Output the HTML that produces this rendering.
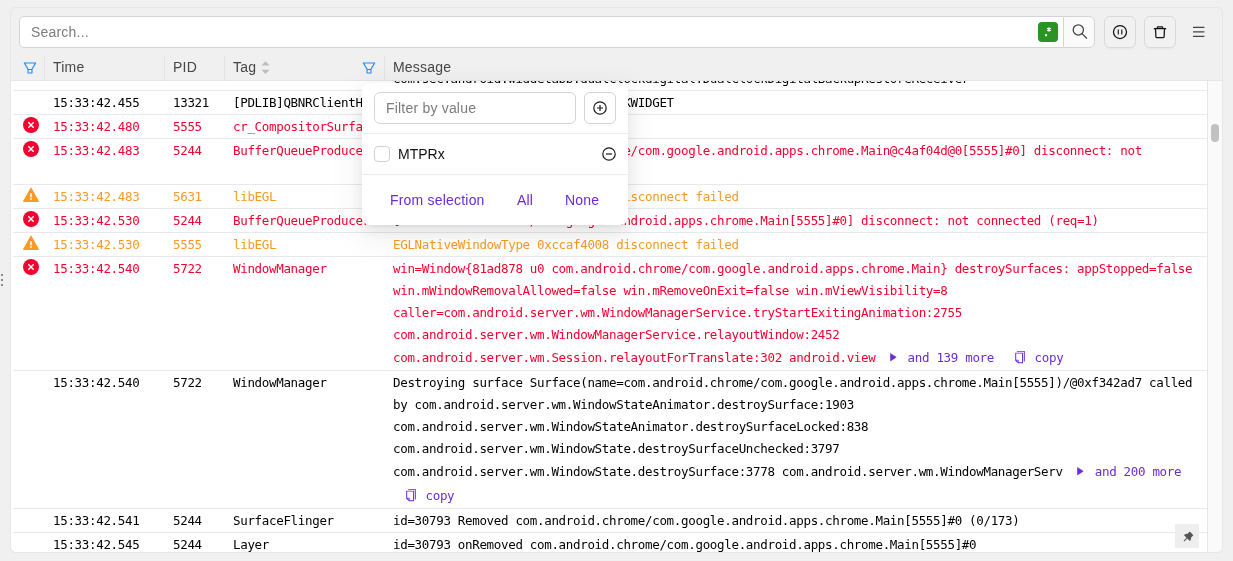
<!DOCTYPE html>
<html lang="en">
<head>
<meta charset="utf-8">
<title>Logs</title>
<style>
*{box-sizing:border-box}
html,body{margin:0;padding:0}
body{width:1233px;height:561px;overflow:hidden;background:#f0f0f0;position:relative;
  font-family:"Liberation Sans",sans-serif;font-size:14px;letter-spacing:.2px;color:rgba(0,0,0,.85)}
.abs{position:absolute}
#panel{position:absolute;left:10px;top:7px;width:1213px;height:546px;border:1px solid #e7e7e7;border-radius:6px;background:#f0f0f0;overflow:hidden}
/* coordinates inside #inner are page coordinates */
#inner{will-change:transform;position:absolute;left:-11px;top:-8px;width:1233px;height:561px}
#search{left:19px;top:16px;width:1045px;height:32px;background:#fff;border:1px solid #d4d4d4;border-radius:5px 0 0 5px}
#search .ph{position:absolute;left:11px;top:0;line-height:30px;color:#7c7c7c;font-size:14px}
#regex{left:1038px;top:22px;width:20px;height:20px;border-radius:4px;background:#2a9423}
#sbtn{left:1063px;top:16px;width:32px;height:32px;background:#fafafa;border:1px solid #d4d4d4;border-radius:0 6px 6px 0}
.tbtn{width:32px;height:32px;top:16px;border:1px solid #d9d9d9;border-radius:6px;background:#f1f1f1;box-shadow:0 2px 0 rgba(0,0,0,.02)}
svg{display:block;position:absolute;overflow:visible}
/* header */
#thead{left:11px;top:55px;width:1211px;height:26px;border-bottom:1px solid #e6e6e6}
.th{position:absolute;top:0;height:26px;line-height:25px;font-size:14px;color:#464646}
.sep{position:absolute;top:1px;width:1px;height:25px;background:#e3e3e3}
/* body */
#tbody{left:11px;top:81px;width:1196px;height:471px;background:#fff;overflow:hidden}
#track{left:1207px;top:81px;width:15px;height:471px;background:#fafafa;border-left:1px solid #e6e6e6}
#thumb{left:1211px;top:124px;width:8px;height:18px;border-radius:4px;background:#c1c1c1}
.row{position:absolute;left:0;width:1196px;border-top:1px solid #e9e9e9;
  font-family:"DejaVu Sans Mono","Liberation Mono",monospace;font-size:12.5px;letter-spacing:-0.325px;line-height:22px;color:#000;white-space:pre}
.row span.c{position:absolute;top:1px}
.row .t{left:42px}.row .p{left:162px}.row .g{left:222px;width:144px;overflow:hidden;text-overflow:ellipsis}
.row .m{left:382px}
.row.e{color:#f3002e}
.row.w{color:#f99a26}
.ln{display:block;height:22px}
.ln.b{height:24px;line-height:24px}
.lk{color:#6c2bd9}
/* popup */
#pop{left:362px;top:83px;width:266px;height:142px;background:#fff;border-radius:8px;
  box-shadow:0 6px 16px 0 rgba(0,0,0,.08),0 3px 6px -4px rgba(0,0,0,.12),0 9px 28px 8px rgba(0,0,0,.05)}
#pop .inp{position:absolute;left:12px;top:9px;width:202px;height:32px;border:1px solid #d4d4d4;border-radius:6px;background:#fff}
#pop .inp span{position:absolute;left:11px;top:0;line-height:30px;color:#7c7c7c}
#pop .add{position:absolute;left:222px;top:9px;width:32px;height:32px;border:1px solid #d4d4d4;border-radius:6px;background:#fff;box-shadow:0 2px 0 rgba(0,0,0,.02)}
#pop .hr{position:absolute;left:0;width:266px;height:1px;background:#ececec}
#pop .cb{position:absolute;left:12px;top:63px;width:16px;height:16px;border:1px solid #d0d0d0;border-radius:4px;background:#fff}
#pop .lbl{position:absolute;left:36px;top:60px;line-height:22px;color:#111;letter-spacing:0}
#pop .a{position:absolute;top:106px;line-height:22px;color:#6c2bd9}
#pin{left:1175px;top:524px;width:24px;height:24px;background:#eee}
.dot{position:absolute;left:1px;width:2px;height:2px;background:#8a8a8a}
</style>
</head>
<body>
<div class="dot" style="top:274px"></div><div class="dot" style="top:279px"></div><div class="dot" style="top:284px"></div>
<div id="panel"><div id="inner">

<!-- toolbar -->
<div id="search" class="abs"><span class="ph">Search...</span></div>
<div id="regex" class="abs">
  <svg width="20" height="20" viewBox="0 0 20 20" style="left:0;top:0"><rect x="7" y="12.2" width="2.1" height="2.1" fill="#fff"/><g stroke="#fff" stroke-width="1.1" stroke-linecap="butt"><path d="M11 5.2v4.6M9 6.35l4 2.3M13 6.35l-4 2.3"/></g></svg>
</div>
<div id="sbtn" class="abs">
  <svg width="16" height="16" viewBox="0 0 16 16" style="left:8px;top:6.300px" fill="none" stroke="#444" stroke-width="1.250"><circle cx="6.300" cy="6.900" r="5.100"/><path d="M10 10.600l4.600 4.600" stroke-linecap="round"/></svg>
</div>
<div class="tbtn abs" style="left:1104px">
  <svg width="16" height="16" viewBox="0 0 16 16" style="left:7px;top:7px" fill="none" stroke="#111" stroke-width="1.25"><circle cx="8" cy="8" r="6.5"/><path d="M6.300 5.400v5.200M9.800 5.400v5.200" stroke-width="1.100"/></svg>
</div>
<div class="tbtn abs" style="left:1144px">
  <svg width="16" height="16" viewBox="0 0 16 16" style="left:7px;top:7px" fill="none" stroke="#111" stroke-width="1.25"><path d="M1.800 4.700h12.400M5.300 4.500V3.500c0-.4.300-.7.700-.7h4c.4 0 .7.300.7.700v1M3.500 4.900l.4 7.900c0 .5.400.8.800.8h6.600c.4 0 .8-.3.800-.8l.4-7.900"/></svg>
</div>
<svg width="12" height="12" viewBox="0 0 12 12" style="left:1193.200px;top:26px" stroke="#444" stroke-width="1.350"><path d="M0 1.400h11.400M0 5.900h11.400M0 10.400h11.400"/></svg>

<!-- header -->
<div id="thead" class="abs">
  <svg width="16" height="16" viewBox="0 0 1024 1024" style="left:11px;top:4.5px" fill="#1a8cff"><path d="M880.1 154H143.900c-24.500 0-39.800 26.700-27.500 48L349 597.400V838c0 17.700 14.200 32 31.800 32h262.400c17.600 0 31.800-14.300 31.800-32V597.400L907.700 202c12.200-21.300-3.100-48-27.600-48zM603.400 798H420.600V642h182.900v156zm9.600-236.600l-9.500 16.600h-183l-9.500-16.600L212.700 226h598.600L613 561.400z"/></svg>
  <div class="sep" style="left:33px"></div>
  <div class="th" style="left:42px">Time</div>
  <div class="sep" style="left:153px"></div>
  <div class="th" style="left:162px">PID</div>
  <div class="sep" style="left:213px"></div>
  <div class="th" style="left:222px">Tag</div>
  <svg width="9" height="14" viewBox="0 0 9 14" style="left:250px;top:6px" fill="#bdbdbd"><path d="M4.500 .3L8.600 4.600H.400zM4.500 13.000L8.600 8.700H.400z"/></svg>
  <svg width="16" height="16" viewBox="0 0 1024 1024" style="left:350px;top:4.5px" fill="#1a8cff"><path d="M880.1 154H143.900c-24.500 0-39.800 26.700-27.500 48L349 597.400V838c0 17.700 14.200 32 31.800 32h262.400c17.600 0 31.800-14.300 31.800-32V597.400L907.700 202c12.200-21.300-3.100-48-27.600-48zM603.400 798H420.600V642h182.900v156zm9.600-236.600l-9.500 16.600h-183l-9.500-16.600L212.700 226h598.600L613 561.400z"/></svg>
  <div class="sep" style="left:373px"></div>
  <div class="th" style="left:382px">Message</div>
</div>

<!-- body -->
<div id="tbody" class="abs">
<div class="row " style="top:-37px;height:46px"><span class="c t">15:33:42.455</span><span class="c p">13321</span><span class="c g">[PDLIB]QBNRClientHelper</span><span class="c m"><span class="ln">registerBackupReceiver : component=</span><span class="ln">com.sec.android.widgetapp.dualclockdigital.DualClockDigitalBackupRestoreReceiver</span></span></div>
<div class="row " style="top:9px;height:24px"><span class="c t">15:33:42.455</span><span class="c p">13321</span><span class="c g">[PDLIB]QBNRClientHelper</span><span class="c m"><span class="ln">registerReceiver source=DUALCLOCKWIDGET</span></span></div>
<div class="row e" style="top:33px;height:24px"><svg width="16" height="16" viewBox="0 0 16 16" style="left:12px;top:2px"><circle cx="8" cy="8" r="8" fill="#f3002e"/><path d="M5.300 5.300l5.400 5.400M10.700 5.300l-5.400 5.400" stroke="#fff" stroke-width="1.400" fill="none"/></svg><span class="c t">15:33:42.480</span><span class="c p">5555</span><span class="c g">cr_CompositorSurfaceMgr</span><span class="c m"><span class="ln">Transitioning to surface-less</span></span></div>
<div class="row e" style="top:57px;height:46px"><svg width="16" height="16" viewBox="0 0 16 16" style="left:12px;top:2px"><circle cx="8" cy="8" r="8" fill="#f3002e"/><path d="M5.300 5.300l5.400 5.400M10.700 5.300l-5.400 5.400" stroke="#fff" stroke-width="1.400" fill="none"/></svg><span class="c t">15:33:42.483</span><span class="c p">5244</span><span class="c g">BufferQueueProducer</span><span class="c m"><span class="ln">[SurfaceView - com.android.chrome/com.google.android.apps.chrome.Main@c4af04d@0[5555]#0] disconnect: not</span><span class="ln">connected (req=1)</span></span></div>
<div class="row w" style="top:103px;height:24px"><svg width="16" height="16" viewBox="0 0 16 16" style="left:12px;top:2px"><path d="M8 1.300L15.300 14.300H.700z" fill="#f99a26" stroke="#f99a26" stroke-width="1.200" stroke-linejoin="round"/><path d="M8 6.200v4" stroke="#fff" stroke-width="1.600"/><rect x="7.200" y="11.200" width="1.600" height="1.600" fill="#fff"/></svg><span class="c t">15:33:42.483</span><span class="c p">5631</span><span class="c g">libEGL</span><span class="c m"><span class="ln">EGLNativeWindowType 0xccaf4008 disconnect failed</span></span></div>
<div class="row e" style="top:127px;height:24px"><svg width="16" height="16" viewBox="0 0 16 16" style="left:12px;top:2px"><circle cx="8" cy="8" r="8" fill="#f3002e"/><path d="M5.300 5.300l5.400 5.400M10.700 5.300l-5.400 5.400" stroke="#fff" stroke-width="1.400" fill="none"/></svg><span class="c t">15:33:42.530</span><span class="c p">5244</span><span class="c g">BufferQueueProducer</span><span class="c m"><span class="ln">[com.android.chrome/com.google.android.apps.chrome.Main[5555]#0] disconnect: not connected (req=1)</span></span></div>
<div class="row w" style="top:151px;height:24px"><svg width="16" height="16" viewBox="0 0 16 16" style="left:12px;top:2px"><path d="M8 1.300L15.300 14.300H.700z" fill="#f99a26" stroke="#f99a26" stroke-width="1.200" stroke-linejoin="round"/><path d="M8 6.200v4" stroke="#fff" stroke-width="1.600"/><rect x="7.200" y="11.200" width="1.600" height="1.600" fill="#fff"/></svg><span class="c t">15:33:42.530</span><span class="c p">5555</span><span class="c g">libEGL</span><span class="c m"><span class="ln">EGLNativeWindowType 0xccaf4008 disconnect failed</span></span></div>
<div class="row e" style="top:175px;height:114px"><svg width="16" height="16" viewBox="0 0 16 16" style="left:12px;top:2px"><circle cx="8" cy="8" r="8" fill="#f3002e"/><path d="M5.300 5.300l5.400 5.400M10.700 5.300l-5.400 5.400" stroke="#fff" stroke-width="1.400" fill="none"/></svg><span class="c t">15:33:42.540</span><span class="c p">5722</span><span class="c g">WindowManager</span><span class="c m"><span class="ln">win=Window{81ad878 u0 com.android.chrome/com.google.android.apps.chrome.Main} destroySurfaces: appStopped=false</span><span class="ln">win.mWindowRemovalAllowed=false win.mRemoveOnExit=false win.mViewVisibility=8</span><span class="ln">caller=com.android.server.wm.WindowManagerService.tryStartExitingAnimation:2755</span><span class="ln">com.android.server.wm.WindowManagerService.relayoutWindow:2452</span><span class="ln b" style="position:relative">com.android.server.wm.Session.relayoutForTranslate:302 android.view<svg width="7" height="9" viewBox="0 0 7 9" style="position:absolute;left:496.5px;top:7px" fill="#6c2bd9"><path d="M.5 .5L6.200 4.200L.5 7.900z" stroke="#6c2bd9" stroke-width=".6" stroke-linejoin="round"/></svg><span class="lk" style="position:absolute;left:514.6px;top:0">and 139 more</span><svg width="14" height="14" viewBox="0 0 1024 1024" style="position:absolute;left:619.8px;top:4px" fill="#6c2bd9"><path d="M832 64H296c-4.400 0-8 3.600-8 8v56c0 4.400 3.600 8 8 8h496v688c0 4.400 3.600 8 8 8h56c4.400 0 8-3.600 8-8V96c0-17.700-14.300-32-32-32zM704 192H192c-17.700 0-32 14.300-32 32v530.700c0 8.500 3.400 16.600 9.400 22.600l173.300 173.300c2.200 2.200 4.700 4 7.400 5.500v1.900h4.200c3.500 1.300 7.200 2 11 2H704c17.700 0 32-14.300 32-32V224c0-17.700-14.300-32-32-32zM350 856.200L263.900 770H350v86.200zM664 888H414V746c0-22.100-17.900-40-40-40H232V264h432v624z"/></svg><span class="lk" style="position:absolute;left:641.6px;top:0">copy</span></span></span></div>
<div class="row " style="top:289px;height:138px"><span class="c t">15:33:42.540</span><span class="c p">5722</span><span class="c g">WindowManager</span><span class="c m"><span class="ln">Destroying surface Surface(name=com.android.chrome/com.google.android.apps.chrome.Main[5555])/@0xf342ad7 called</span><span class="ln">by com.android.server.wm.WindowStateAnimator.destroySurface:1903</span><span class="ln">com.android.server.wm.WindowStateAnimator.destroySurfaceLocked:838</span><span class="ln">com.android.server.wm.WindowState.destroySurfaceUnchecked:3797</span><span class="ln b" style="position:relative">com.android.server.wm.WindowState.destroySurface:3778 com.android.server.wm.WindowManagerServ<svg width="7" height="9" viewBox="0 0 7 9" style="position:absolute;left:684.4000000000001px;top:7px" fill="#6c2bd9"><path d="M.5 .5L6.200 4.200L.5 7.900z" stroke="#6c2bd9" stroke-width=".6" stroke-linejoin="round"/></svg><span class="lk" style="position:absolute;left:701.8px;top:0">and 200 more</span></span><span class="ln b" style="position:relative"> <svg width="14" height="14" viewBox="0 0 1024 1024" style="position:absolute;left:10.699999999999989px;top:4px" fill="#6c2bd9"><path d="M832 64H296c-4.400 0-8 3.600-8 8v56c0 4.400 3.600 8 8 8h496v688c0 4.400 3.600 8 8 8h56c4.400 0 8-3.600 8-8V96c0-17.700-14.300-32-32-32zM704 192H192c-17.700 0-32 14.300-32 32v530.700c0 8.500 3.400 16.600 9.400 22.600l173.300 173.300c2.200 2.200 4.700 4 7.400 5.500v1.900h4.200c3.500 1.300 7.200 2 11 2H704c17.700 0 32-14.300 32-32V224c0-17.700-14.300-32-32-32zM350 856.200L263.900 770H350v86.200zM664 888H414V746c0-22.100-17.900-40-40-40H232V264h432v624z"/></svg><span class="lk" style="position:absolute;left:32.5px;top:0">copy</span></span></span></div>
<div class="row " style="top:427px;height:24px"><span class="c t">15:33:42.541</span><span class="c p">5244</span><span class="c g">SurfaceFlinger</span><span class="c m"><span class="ln">id=30793 Removed com.android.chrome/com.google.android.apps.chrome.Main[5555]#0 (0/173)</span></span></div>
<div class="row " style="top:451px;height:24px"><span class="c t">15:33:42.545</span><span class="c p">5244</span><span class="c g">Layer</span><span class="c m"><span class="ln">id=30793 onRemoved com.android.chrome/com.google.android.apps.chrome.Main[5555]#0</span></span></div>
<div style="position:absolute;left:0;top:0;width:2px;height:471px;background:#fff"></div>
</div>
<div id="track" class="abs"></div>
<div id="thumb" class="abs"></div>
<div id="pin" class="abs">
  <svg width="13" height="13" viewBox="0 0 1024 1024" style="left:7px;top:6px" fill="#555"><path d="M878.300 392.100L631.900 145.700c-6.500-6.500-15-9.700-23.500-9.700s-17 3.200-23.500 9.700L423.800 306.900c-12.200-1.400-24.500-2-36.800-2-73.200 0-146.400 24.100-206.500 72.300-15.400 12.300-16.700 35.400-2.700 49.400l181.700 181.700-215.400 215.200a15.800 15.800 0 0 0-4.600 9.800l-3.400 37.200c-.9 9.400 6.600 17.400 15.900 17.400.5 0 1 0 1.500-.1l37.200-3.400c3.700-.3 7.200-2 9.800-4.600l215.400-215.400 181.700 181.700c6.500 6.500 15 9.700 23.500 9.700 9.700 0 19.300-4.200 25.900-12.400 56.300-70.300 79.700-158.300 70.200-243.400l161.100-161.100c12.900-12.800 12.900-33.800 0-46.800z"/></svg>
</div>

<!-- popup -->
<div id="pop" class="abs">
  <div class="inp"><span>Filter by value</span></div>
  <div class="add"><svg width="14" height="14" viewBox="0 0 14 14" style="left:8px;top:8px" fill="none" stroke="#1a1a1a" stroke-width="1.2"><circle cx="7" cy="7" r="6.200"/><path d="M4 7h6M7 4v6"/></svg></div>
  <div class="hr" style="top:50px"></div>
  <div class="cb"></div>
  <div class="lbl">MTPRx</div>
  <svg width="14" height="14" viewBox="0 0 14 14" style="left:240px;top:64px" fill="none" stroke="#1a1a1a" stroke-width="1.2"><circle cx="7" cy="7" r="6.200"/><path d="M4 7h6"/></svg>
  <div class="hr" style="top:91px"></div>
  <div class="a" style="left:28px">From selection</div>
  <div class="a" style="left:155px">All</div>
  <div class="a" style="left:203px">None</div>
</div>

</div></div>
</body>
</html>
